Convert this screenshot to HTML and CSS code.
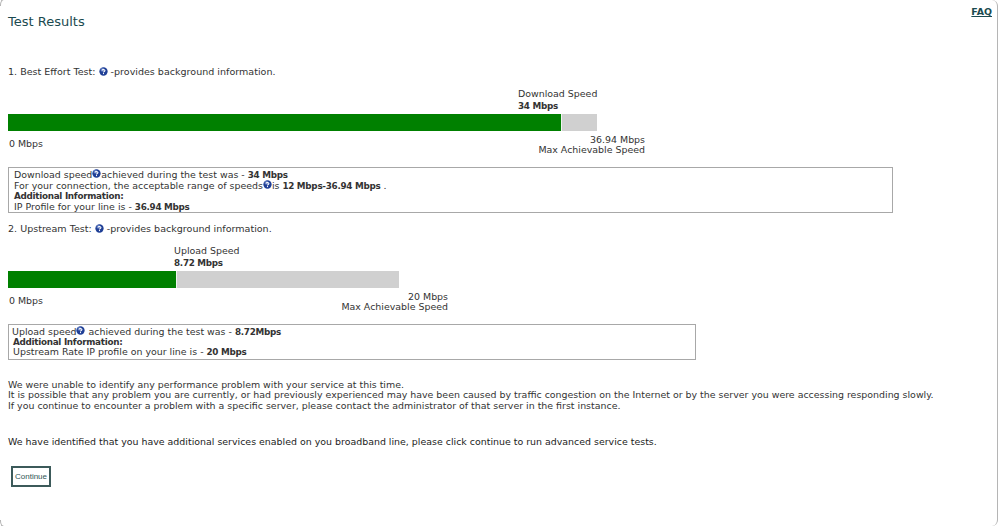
FILE: index.html
```html
<!DOCTYPE html>
<html lang="en">
<head>
<meta charset="utf-8">
<title>Test Results</title>
<link rel="stylesheet" href="styles.css">
</head>
<body>
<svg class="defs" width="0" height="0" aria-hidden="true">
  <symbol id="help" viewBox="0 0 10 10">
    <circle cx="5" cy="5" r="4.6" fill="#1f3f96"/>
    <circle cx="3.8" cy="3" r="2.2" fill="#7f9ad8" opacity=".6"/>
    <path d="M3.4 3.9C3.5 2.7 6.6 2.5 6.6 4C6.6 5 5 5 5 6" fill="none" stroke="#fff" stroke-width="1.2"/>
    <rect x="4.4" y="6.7" width="1.2" height="1.2" fill="#fff"/>
  </symbol>
</svg>
<main class="page">
  <header class="top">
    <h1 class="title">Test Results</h1>
    <a class="faq" href="#">FAQ</a>
  </header>

  <p class="test-head first">1. Best Effort Test: <svg class="help"><use href="#help"/></svg> -provides background information.</p>

  <section class="meter download">
    <div class="current"><div>Download Speed</div><b>34 Mbps</b></div>
    <div class="track"><div class="fill"></div></div>
    <div class="scale">
      <span class="min">0 Mbps</span>
      <span class="max">36.94 Mbps<br>Max Achievable Speed</span>
    </div>
  </section>

  <div class="info info-down">
    Download speed<svg class="help tight"><use href="#help"/></svg>achieved during the test was - <b>34 Mbps</b><br>
    For your connection, the acceptable range of speeds<svg class="help tight"><use href="#help"/></svg>is <b>12 Mbps-36.94 Mbps</b> .<br>
    <b>Additional Information:</b><br>
    IP Profile for your line is - <b>36.94 Mbps</b>
  </div>

  <p class="test-head second">2. Upstream Test: <svg class="help"><use href="#help"/></svg> -provides background information.</p>

  <section class="meter upload">
    <div class="current"><div>Upload Speed</div><b>8.72 Mbps</b></div>
    <div class="track"><div class="fill"></div></div>
    <div class="scale">
      <span class="min">0 Mbps</span>
      <span class="max">20 Mbps<br>Max Achievable Speed</span>
    </div>
  </section>

  <div class="info info-up">
    <span class="out">Upload speed<svg class="help tight"><use href="#help"/></svg> achieved during the test was - <b>8.72Mbps</b></span><br>
    <b>Additional Information:</b><br>
    Upstream Rate IP profile on your line is - <b>20 Mbps</b>
  </div>

  <p class="message">We were unable to identify any performance problem with your service at this time.<br>
  It is possible that any problem you are currently, or had previously experienced may have been caused by traffic congestion on the Internet or by the server you were accessing responding slowly.<br>
  If you continue to encounter a problem with a specific server, please contact the administrator of that server in the first instance.</p>

  <p class="message extra">We have identified that you have additional services enabled on you broadband line, please click continue to run advanced service tests.</p>

  <button class="continue" type="button">Continue</button>
</main>
</body>
</html>
```
FILE: styles.css
```css
* { box-sizing: border-box; }
html, body { margin: 0; height: 526px; overflow: hidden; background: #fff; }
.defs { position: absolute; }
.page {
  position: relative;
  overflow: hidden;
  height: 526px;
  width: 998px;
  padding: 0 0 0 8px;
  border-right: 1px solid #b5b5b5;
  border-top-right-radius: 6px;
  border-bottom-right-radius: 6px;
  font: 9.44px/10.3px "DejaVu Sans", Verdana, sans-serif;
  color: #333;
}
.page::before, .page::after {
  content: "";
  position: absolute;
  left: 0;
  width: 4px;
  height: 6px;
  border-left: 1px solid #b5b5b5;
}
.page::before { top: -1px; border-top: 1px solid #b5b5b5; border-top-left-radius: 4px 6px; }
.page::after { bottom: -1px; border-bottom: 1px solid #b5b5b5; border-bottom-left-radius: 4px 6px; }
.top { display: flex; justify-content: space-between; align-items: flex-start; height: 67px; padding-top: 6px; padding-right: 5px; }
.title { margin: 8px 0 0; font-size: 13px; line-height: 16px; font-weight: 400; color: #1b4a50; }
.faq { font-weight: 700; color: #1b4a50; line-height: 11px; }
.test-head { margin: 0; height: 11px; white-space: nowrap; font-size: 9.55px; }
.help { width: 9px; height: 9px; vertical-align: -1px; }
.tight { vertical-align: 0; }
b { font-size: 8.8px; letter-spacing: -0.28px; }
.first { margin-bottom: 10px; }
.second { margin-top: 11px; margin-bottom: 10px; }
.current { height: 26px; line-height: 12px; }
.download .current { margin-left: 510px; }
.upload .current { margin-left: 166px; }
.track { height: 17px; background: #d0d0d0; }
.fill { height: 17px; background: #008000; border-right: 1px solid #eef5ee; }
.download .track { width: 589px; }
.download .fill { width: 554px; }
.upload .track { width: 391px; }
.upload .fill { width: 169px; }
.scale { display: flex; justify-content: space-between; padding-top: 4px; height: 36px; }
.download .scale { width: 637px; }
.upload .scale { width: 440px; }
.min { margin-top: 4px; padding-left: 1px; }
.max { text-align: right; }
.info { border: 1px solid #a8a8a8; white-space: nowrap; line-height: 10.2px; }
.info-down { width: 885px; height: 46px; padding: 1px 0 0 5px; }
.info-up { width: 688px; height: 36px; padding: 1px 0 0 4px; }
.out { margin-left: -1px; }
.message { margin: 20px 0 0; white-space: nowrap; }
.extra { margin-top: 26px; color: #222; }
.continue {
  display: block;
  margin: 19px 0 0 3px;
  width: 40px;
  height: 21px;
  padding: 0;
  background: #fff;
  border: 2px solid #3c5a5a;
  color: #2f5555;
  font: 8px "Liberation Sans", Arial, sans-serif;
}
```
